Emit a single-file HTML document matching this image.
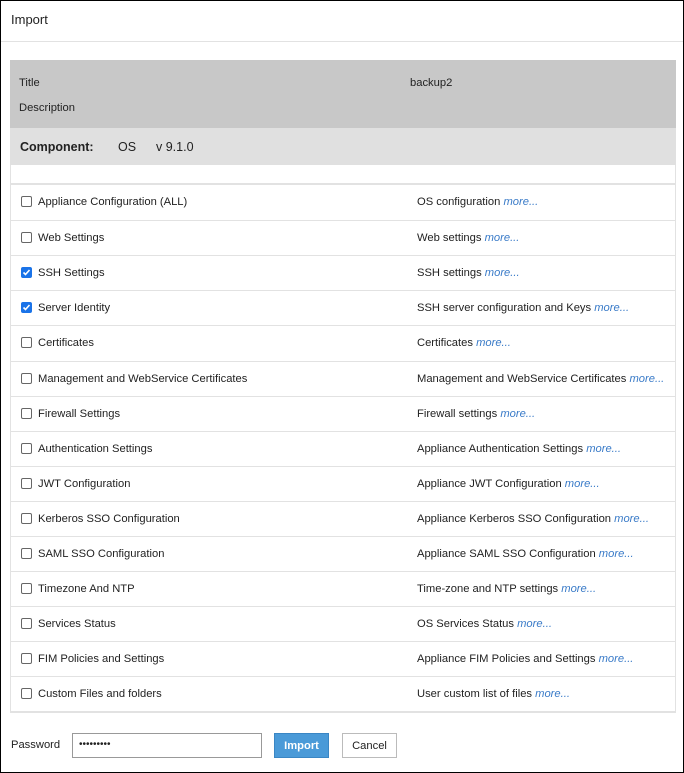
<!DOCTYPE html><html><head><style>
*{margin:0;padding:0;box-sizing:border-box}
body{width:684px;height:773px;position:relative;background:#fff;font-family:"Liberation Sans",sans-serif;font-size:11.2px;color:#222;overflow:hidden}
#o{position:absolute;left:0;top:0;width:684px;height:773px;border:1px solid #000}
.a{position:absolute}
.row{position:absolute;left:10px;width:666px;height:35px;border-top:1px solid #e2e2e2}
.cb{position:absolute;left:11px;top:11px;width:11px;height:11px;border:1px solid #666;border-radius:2px;background:#fff}
.cb.c{background:#1a73e8;border-color:#1a73e8}
.l{position:absolute;left:28px;top:11px}
.r{position:absolute;left:407px;top:11px}
.m{color:#3a7bc8;font-style:italic}
</style></head><body><div id="o"></div>
<div class="a" style="left:11px;top:12px;font-size:13px">Import</div>
<div class="a" style="left:1px;top:41px;width:682px;height:1px;background:#e2e2e2"></div>
<div class="a" style="left:10px;top:60px;width:666px;height:68px;background:#c8c8c8"></div>
<div class="a" style="left:19px;top:77px">Title</div>
<div class="a" style="left:410px;top:77px">backup2</div>
<div class="a" style="left:19px;top:102px">Description</div>
<div class="a" style="left:10px;top:128px;width:666px;height:37px;background:#e0e0e0"></div>
<div class="a" style="left:20px;top:140px;font-size:12.5px;font-weight:bold">Component:</div>
<div class="a" style="left:118px;top:140px;font-size:12.5px">OS</div>
<div class="a" style="left:156px;top:140px;font-size:12.5px">v 9.1.0</div>
<div class="a" style="left:10px;top:165px;width:666px;height:548px;border-left:1px solid #e2e2e2;border-right:1px solid #e2e2e2;border-bottom:2px solid #e2e2e2"></div>
<div class="a" style="left:10px;top:183px;width:666px;height:2px;background:#e2e2e2"></div>
<div id="rows"></div>
<div class="a" style="left:11px;top:739px">Password</div>
<div class="a" style="left:72px;top:733px;width:190px;height:25px;border:1px solid #999;padding:5px 6px;font-size:10px">•••••••••</div>
<div class="a" style="left:274px;top:733px;width:55px;height:25px;background:#4a9ad8;border:1px solid #3a86c4;color:#fff;font-weight:bold;text-align:center;line-height:24px">Import</div>
<div class="a" style="left:342px;top:733px;width:55px;height:25px;border:1px solid #bbb;text-align:center;line-height:24px">Cancel</div>
<script>
var d=[["Appliance Configuration (ALL)","OS configuration",0],["Web Settings","Web settings",0],["SSH Settings","SSH settings",1],["Server Identity","SSH server configuration and Keys",1],["Certificates","Certificates",0],["Management and WebService Certificates","Management and WebService Certificates",0],["Firewall Settings","Firewall settings",0],["Authentication Settings","Appliance Authentication Settings",0],["JWT Configuration","Appliance JWT Configuration",0],["Kerberos SSO Configuration","Appliance Kerberos SSO Configuration",0],["SAML SSO Configuration","Appliance SAML SSO Configuration",0],["Timezone And NTP","Time-zone and NTP settings",0],["Services Status","OS Services Status",0],["FIM Policies and Settings","Appliance FIM Policies and Settings",0],["Custom Files and folders","User custom list of files",0]];
var h="";d.forEach(function(x,i){var t=185+i*35.1;h+='<div class="row" style="top:'+t+'px;'+(i==0?'border-top:none':'')+'"><div class="cb'+(x[2]?' c':'')+'">'+(x[2]?'<svg width="9" height="9" viewBox="0 0 9 9" style="position:absolute;left:0;top:0"><path d="M1.5 4.5L3.5 6.5L7.5 2" stroke="#fff" stroke-width="1.6" fill="none"/></svg>':'')+'</div><div class="l">'+x[0]+'</div><div class="r">'+x[1]+' <span class="m">more...</span></div></div>'});
document.getElementById("rows").outerHTML=h;
</script>
</body></html>
